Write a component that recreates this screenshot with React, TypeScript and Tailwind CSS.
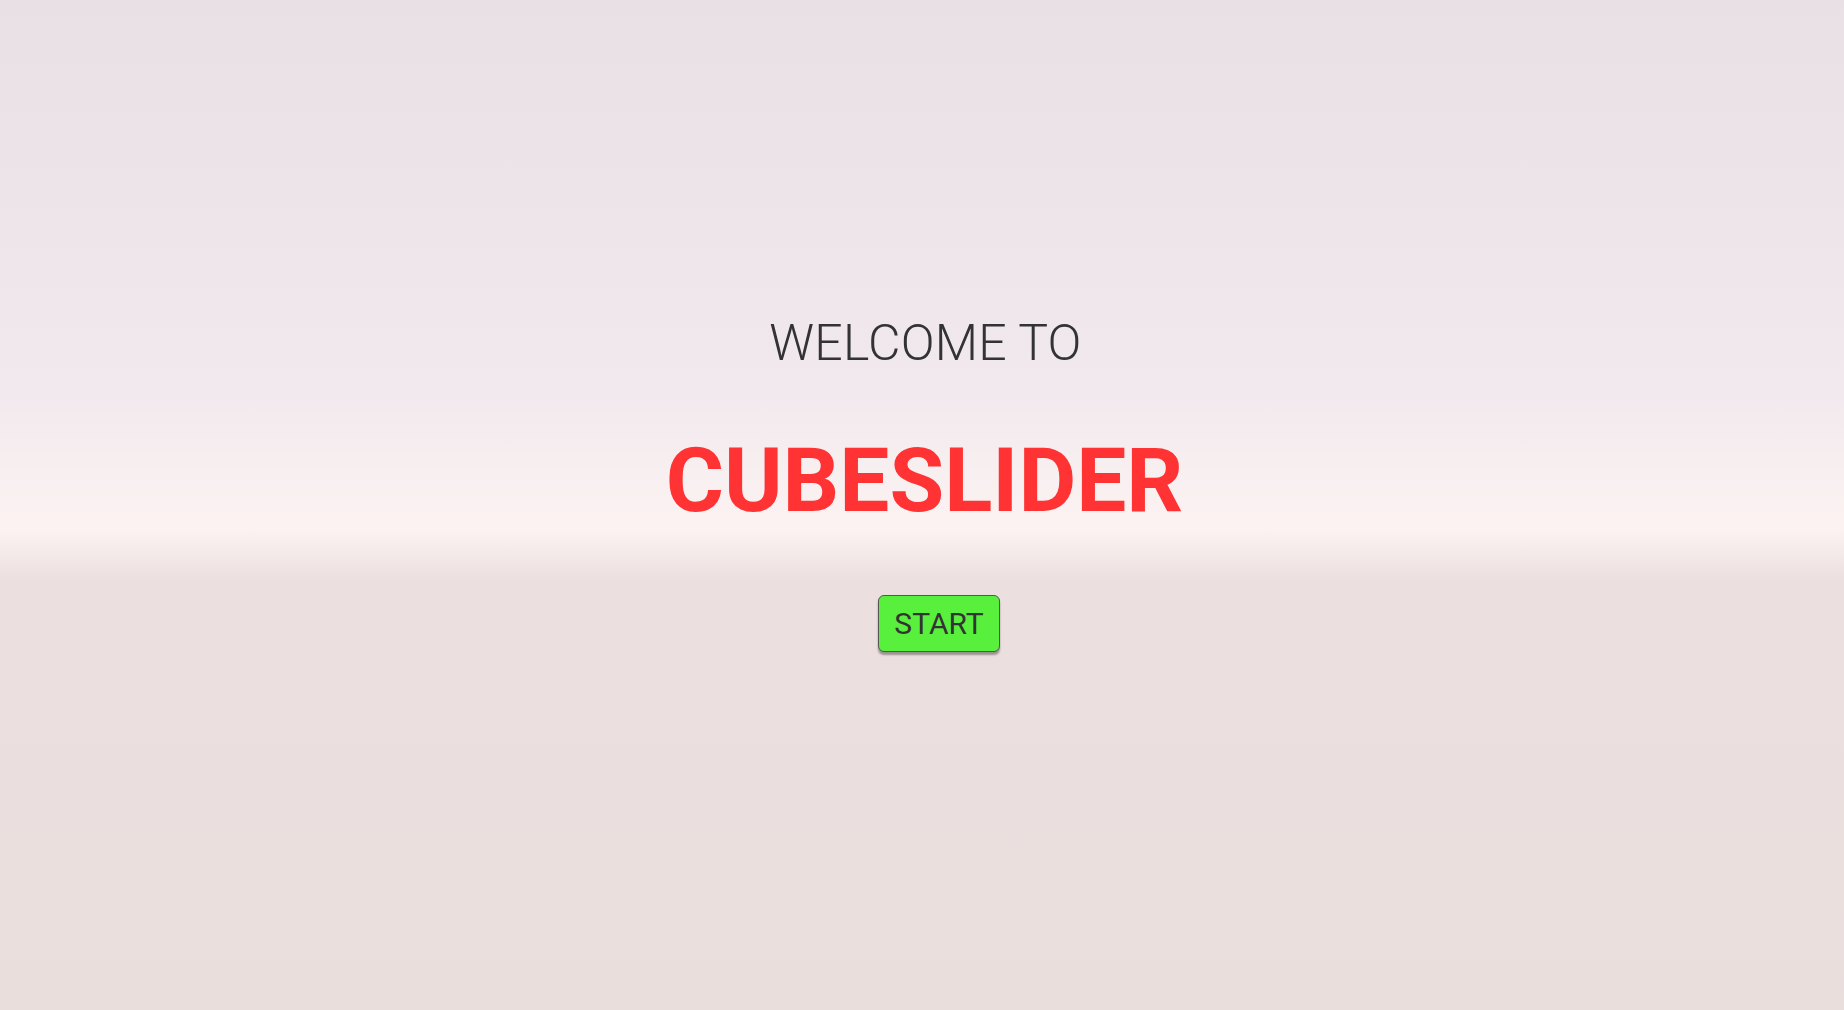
export default function App() {
  return (
    <div className="min-h-screen w-full bg-[linear-gradient(180deg,#e9e0e5_0%,#ede4e9_20%,#f2e9ee_39%,#f8eff0_47%,#fcf2f2_52.5%,#f4e9e9_55%,#ebdfdf_57.5%,#eadedd_100%)] font-['Roboto','Liberation_Sans',sans-serif]">
      <div className="flex flex-col items-center pt-[318px]">
        <h2 className="ml-[7px] text-[50px] leading-none font-light text-[#333333] tracking-[0.2px]">
          WELCOME TO
        </h2>
        <h1 className="mt-[68px] ml-[5px] text-[89px] leading-none font-bold text-[#ff3333]">
          CUBESLIDER
        </h1>
        <button className="mt-[70px] ml-[34px] rounded-[6px] border border-[#555] bg-[#58f03c] px-[15px] pt-[13px] pb-[12px] text-[30px] leading-none text-[#333333] shadow-[0_3px_2px_rgba(0,0,0,0.35)]">
          START
        </button>
      </div>
    </div>
  )
}
